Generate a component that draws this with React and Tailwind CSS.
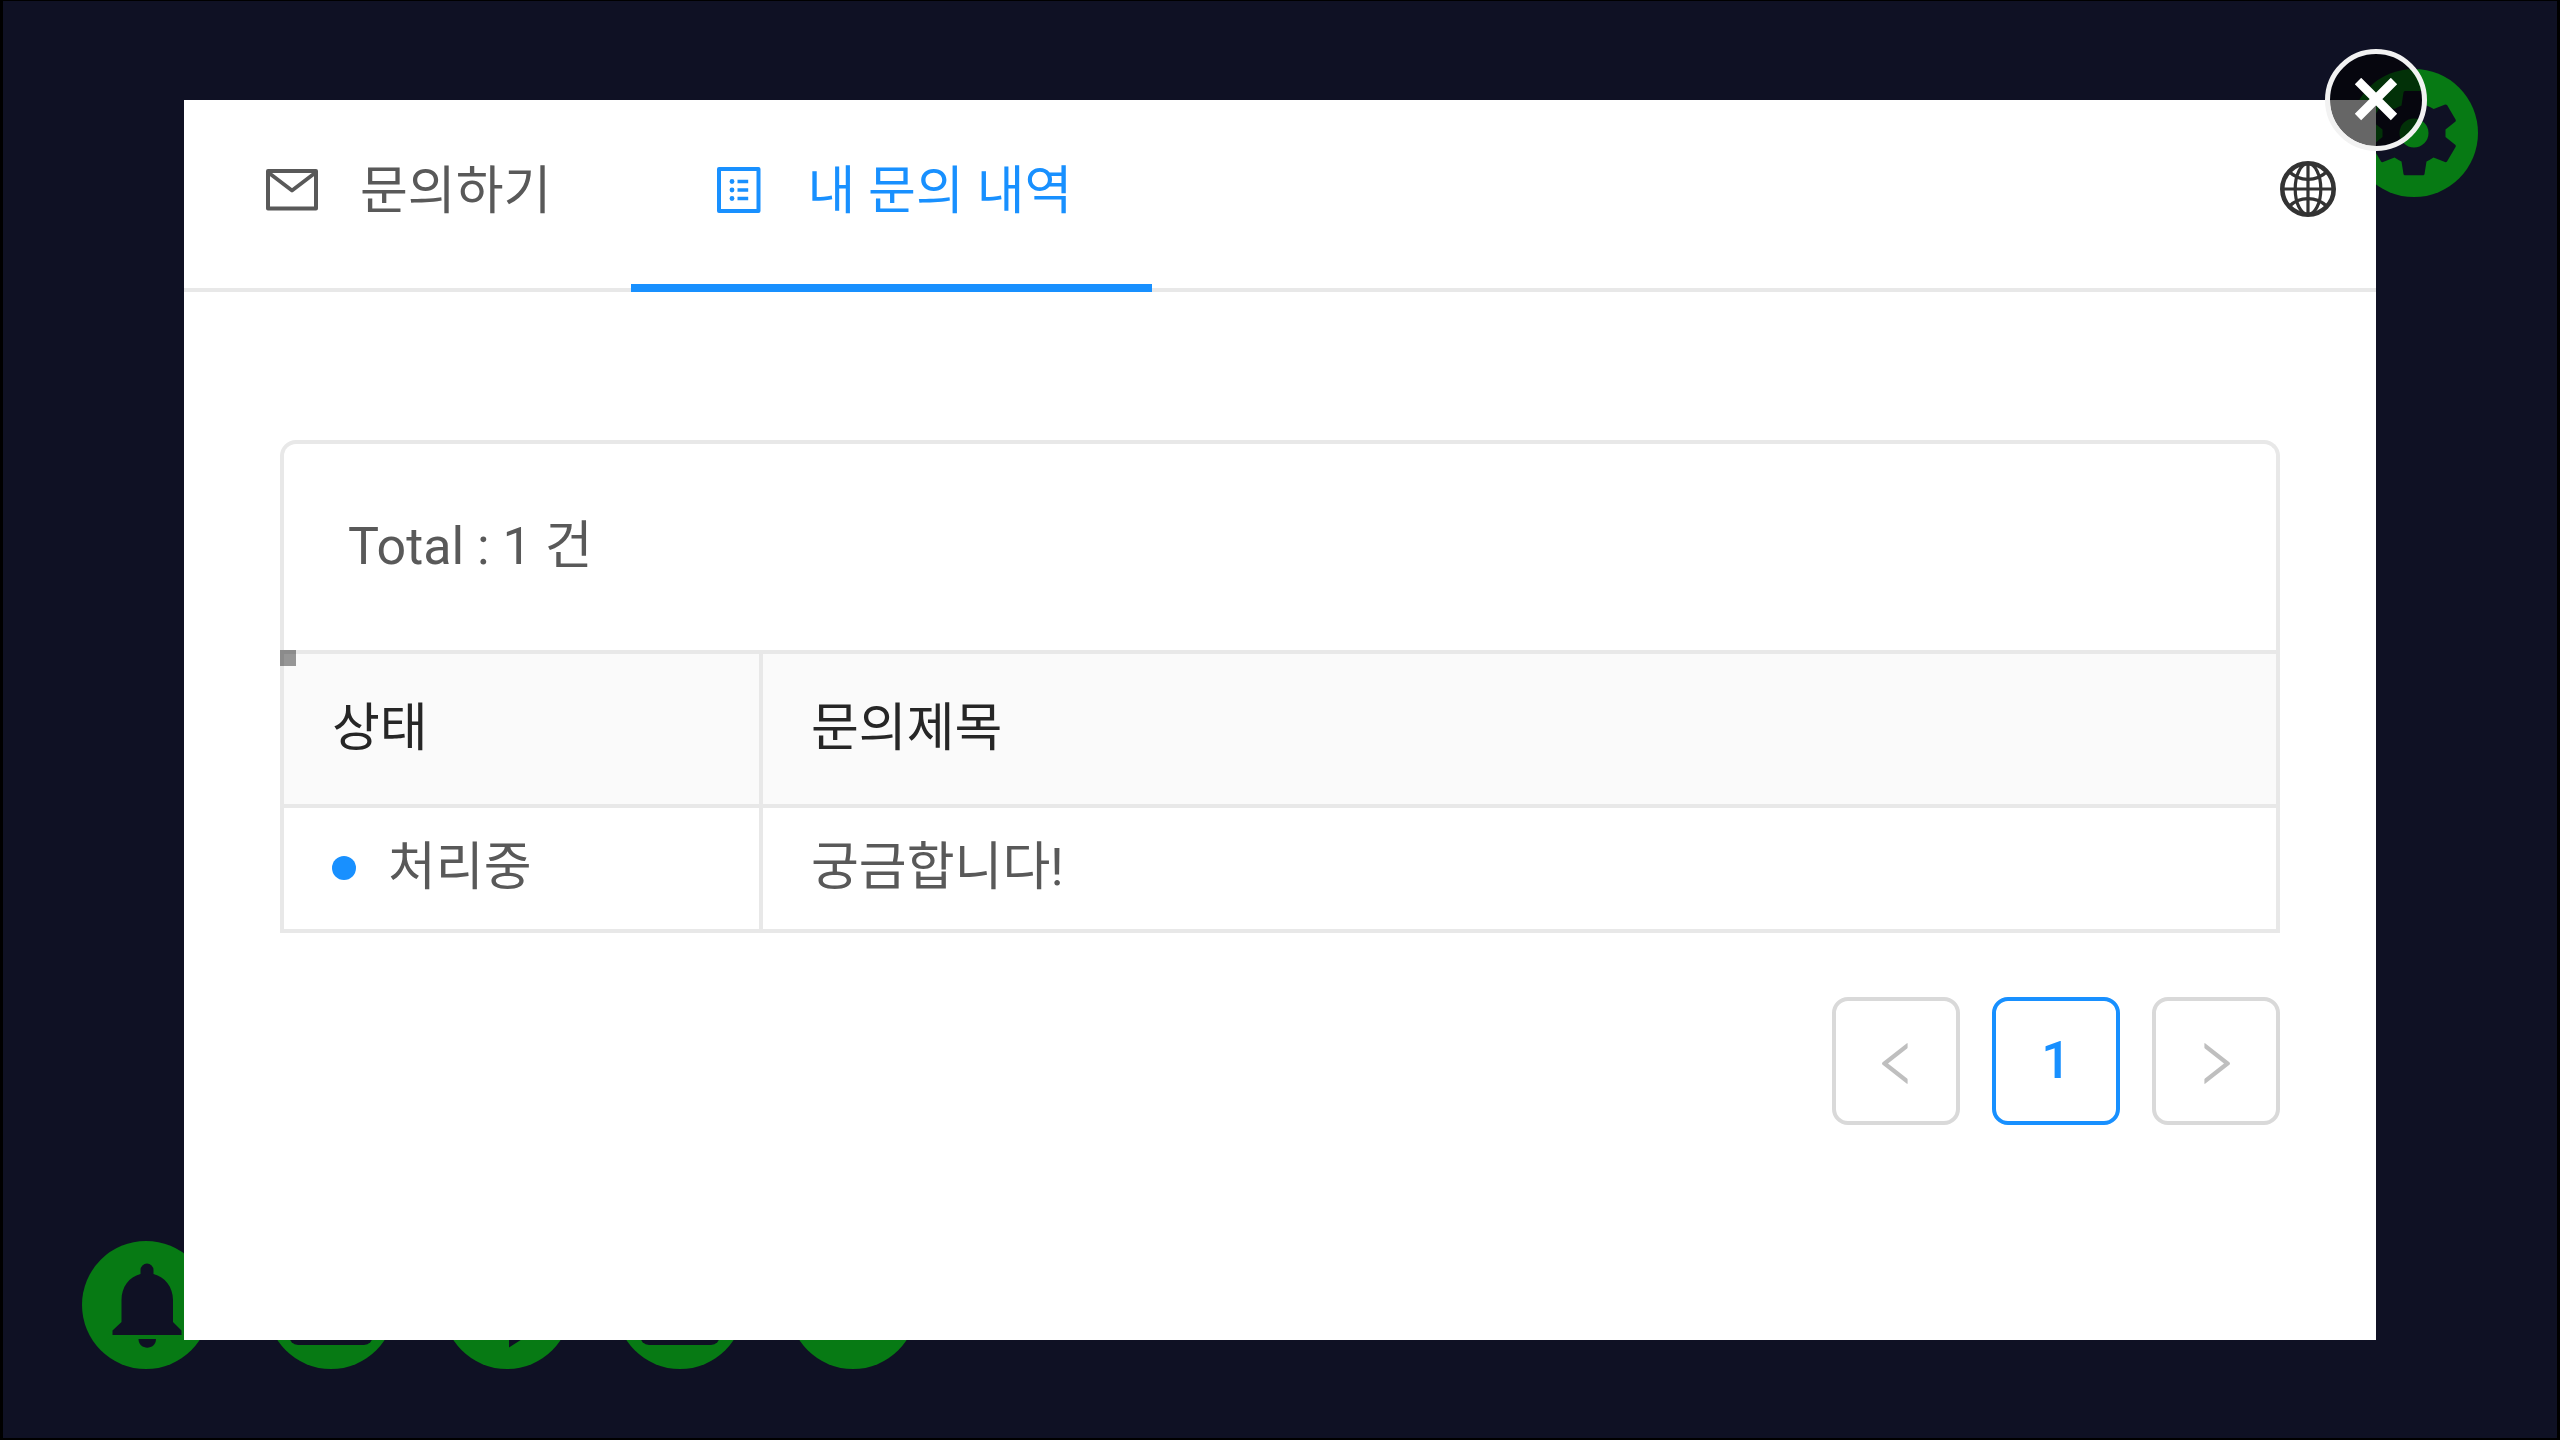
import React from "react";

const NAVY = "#0f1124";

function MailIcon() {
  return (
    <svg viewBox="0 0 56 56" className="size-14" fill="none" stroke="currentColor" strokeWidth="4" strokeLinejoin="round" aria-hidden="true">
      <rect x="4" y="9" width="48" height="37.500" />
      <path d="M5 11 L28 28.500 L51 11" strokeWidth="3.800" />
    </svg>
  );
}

function ListIcon() {
  return (
    <svg viewBox="0 0 56 56" className="size-14" fill="none" stroke="currentColor" strokeWidth="4" strokeLinejoin="round" aria-hidden="true">
      <rect x="8" y="7" width="39.500" height="42" />
      <path d="M26.500 19.500h10.700M26.500 28h10.700M26.500 36.500h10.700" strokeWidth="3.400" />
      <g fill="currentColor" stroke="none">
        <circle cx="21" cy="19.500" r="2.400" />
        <circle cx="21" cy="28" r="2.400" />
        <circle cx="21" cy="36.500" r="2.400" />
      </g>
    </svg>
  );
}

function GlobeIcon() {
  return (
    <svg viewBox="0 0 56 56" className="size-14" fill="none" stroke="#333" strokeWidth="3.200" aria-hidden="true">
      <circle cx="28" cy="28" r="25.700" strokeWidth="4.600" />
      <ellipse cx="28" cy="28" rx="12.800" ry="25.500" />
      <path d="M28 2v52M2 28h52" />
      <path d="M9 10.500Q17 18.300 28 18.300T47 10.500M9 45.500Q17 37.700 28 37.700T47 45.500" />
    </svg>
  );
}

function ArrowIcon({ flip }) {
  return (
    <svg viewBox="0 -4 28 45" className={flip ? "h-[45px] w-7 -scale-x-100" : "h-[45px] w-7"} fill="currentColor" aria-hidden="true">
      <path d="M.6 19.200 24.600.4q1-.8 1 .4v3.600q0 .6-.5 1L6 20.500 25.100 35.600q.5.4.5 1v3.600q0 1.200-1 .4L.6 21.800q-1.200-1.300 0-2.600z" />
    </svg>
  );
}

function Disc({ label, place, children }) {
  return (
    <button type="button" aria-label={label} className={"absolute size-32 rounded-full bg-[#077a14] " + place}>
      <svg viewBox="0 0 128 128" className="size-32" fill={NAVY} aria-hidden="true">
        {children}
      </svg>
    </button>
  );
}

function Tab({ active, icon, children }) {
  return (
    <button
      type="button"
      role="tab"
      aria-selected={active}
      className={
        "-mb-1 flex items-start gap-10 border-b-8 px-20 pt-[62px] pb-[60px] " +
        (active ? "border-[#1890ff] text-[#1890ff]" : "border-transparent text-[#595959]")
      }
    >
      {icon}
      <span className="-mt-0.5 leading-[64px]">{children}</span>
    </button>
  );
}

export default function App() {
  return (
    <div className="relative flex min-h-screen overflow-hidden border-x-[3px] border-t border-b-2 border-black bg-[#0f1124] px-[181px] pt-[99px] pb-[98px] font-['Roboto','Noto_Sans_CJK_KR',sans-serif] text-[52px] leading-[64px] text-[#595959]">
      <Disc label="알림" place="bottom-[69px] left-[79px]">
        <path d="M58.500 33v-4a6.500 6.500 0 0 1 13 0v4C83 36 91 46 91 59v22l8.500 8.500v4.500H30.500v-4.500L39.500 81V59C39.500 46 47 36 58.500 33z" />
        <path d="M56.500 98h17.500c0 11.500-17.500 11.500-17.500 0z" />
      </Disc>
      <Disc label="메시지" place="bottom-[69px] left-[264px]">
        <rect x="22" y="40" width="84" height="64" rx="9" />
      </Disc>
      <Disc label="재생" place="bottom-[69px] left-[440px]">
        <path d="M66 60v46.500l42-27z" />
      </Disc>
      <Disc label="화면" place="bottom-[69px] left-[613px]">
        <rect x="24" y="40" width="80" height="64" rx="9" />
      </Disc>
      <Disc label="더보기" place="bottom-[69px] left-[786px]" />
      <Disc label="설정" place="top-[68px] right-[79px]">
        <path
          fillRule="evenodd"
          d="M55 22h18q1.500 0 1.700 1.500l2 13q4 1.500 7 3.500l11.500-4.500q1.500 0 2 .8l8.500 14.500q.5 1.500-.5 2l-9.700 7.700v7.500l9.700 7.700q1 .8.500 2L97 92.500q-.8 1-2 .5l-11.500-4.500q-3 2-7 4l-2 12.500q-.2 1.200-1.500 1.200H55q-1.300 0-1.500-1.200l-2-12.500q-4-2-7-4L33 93q-1.200.5-2-.5l-8.700-14.800q-.5-1.200.5-2l9.700-7.700v-7.500l-9.700-7.700q-1-.8-.5-2L31 36.300q.8-1 2-.8L44.500 40q3-2 7-3.500l2-13Q53.700 22 55 22zM64 49.500a14.500 14.500 0 1 0 0 29a14.500 14.500 0 1 0 0-29z"
        />
      </Disc>

      <main className="relative min-w-0 flex-1 bg-white">
        <header className="flex items-start justify-between border-b-4 border-[#e8e8e8]">
          <div role="tablist" className="flex">
            <Tab active={false} icon={<MailIcon />}>문의하기</Tab>
            <Tab active icon={<ListIcon />}>내 문의 내역</Tab>
          </div>
          <button type="button" aria-label="언어" className="mt-[61px] mr-10">
            <GlobeIcon />
          </button>
        </header>

        <section className="px-24 pt-[148px]">
          <div className="relative rounded-t-2xl border-4 border-b-0 border-[#e8e8e8] px-16 py-[71px]">
            Total : 1 건
            <span className="absolute -bottom-4 -left-1 size-4 bg-black/40" />
          </div>
          <table className="w-full table-fixed border-collapse text-left">
            <colgroup>
              <col className="w-[24%]" />
              <col />
            </colgroup>
            <thead>
              <tr className="bg-[#fafafa] text-[#262626]">
                <th scope="col" className="border-4 border-[#e8e8e8] px-12 pt-[43px] pb-[43px] font-normal">상태</th>
                <th scope="col" className="border-4 border-[#e8e8e8] px-12 pt-[43px] pb-[43px] font-normal">문의제목</th>
              </tr>
            </thead>
            <tbody>
              <tr>
                <td className="border-4 border-[#e8e8e8] px-12 pt-7 pb-[29px]">
                  <span className="flex items-center gap-8">
                    <span className="size-6 rounded-full bg-[#1890ff]" />
                    처리중
                  </span>
                </td>
                <td className="border-4 border-[#e8e8e8] px-12 pt-7 pb-[29px]">궁금합니다!</td>
              </tr>
            </tbody>
          </table>
          <nav aria-label="페이지" className="mt-16 flex justify-end gap-8">
            <button type="button" aria-label="이전" disabled className="grid size-32 place-items-center rounded-2xl border-4 border-[#d9d9d9] text-[#bfbfbf]">
              <ArrowIcon />
            </button>
            <button type="button" aria-current="page" className="grid size-32 place-items-center rounded-2xl border-4 border-[#1890ff] font-medium text-[#1890ff]">
              1
            </button>
            <button type="button" aria-label="다음" disabled className="grid size-32 place-items-center rounded-2xl border-4 border-[#d9d9d9] text-[#bfbfbf]">
              <ArrowIcon flip />
            </button>
          </nav>
        </section>

        <button type="button" aria-label="닫기" className="absolute -top-[51px] -right-[51px] grid size-[102px] place-items-center rounded-full border-[5px] border-[#f2f2f2] bg-black/60 bg-clip-padding">
          <svg viewBox="0 0 44 44" className="size-11" fill="none" stroke="#fff" strokeWidth="9" aria-hidden="true">
            <path d="M4 3l36 36M40 3L4 39" />
          </svg>
        </button>
      </main>
    </div>
  );
}
